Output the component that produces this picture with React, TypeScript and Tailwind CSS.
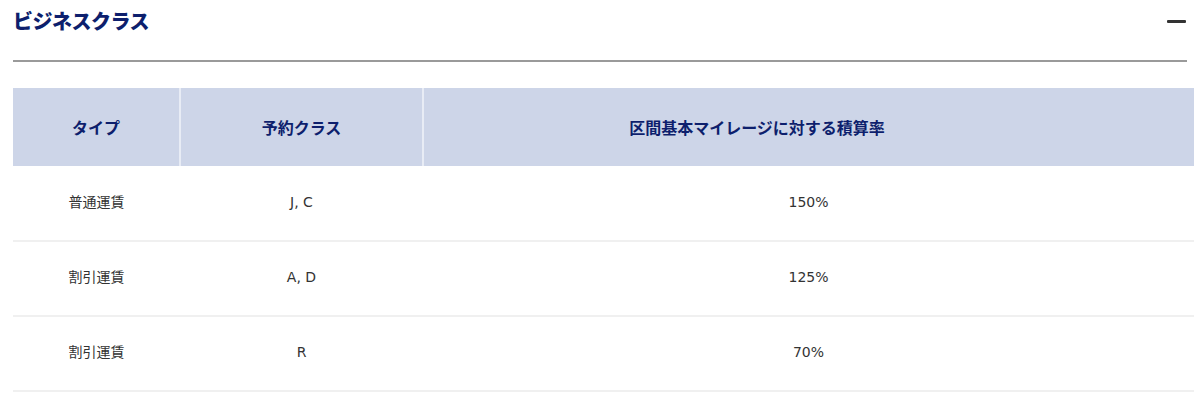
const rows = [
  { type: "普通運賃", cls: "J, C", rate: "150%" },
  { type: "割引運賃", cls: "A, D", rate: "125%" },
  { type: "割引運賃", cls: "R", rate: "70%" },
]

const font = { fontFamily: '"Noto Sans CJK JP", "DejaVu Sans", sans-serif' }
const bodyFont = { fontFamily: '"DejaVu Sans", "Noto Sans CJK JP", sans-serif' }

export default function App() {
  return (
    <div className="w-[1200px] h-[401px] bg-white px-[13px] overflow-hidden" style={font}>
      {/* section heading */}
      <div className="flex items-start justify-between h-[62px] border-b-[2px] border-[#9a9a9a] pt-[10px]">
        <h2 className="text-[20px] font-black text-[#0d1f6d] leading-[22px] tracking-[-0.5px]">ビジネスクラス</h2>
        <span className="block w-[19px] h-[3px] bg-[#333] rounded-[1px] mr-[1px] mt-[10px]" />
      </div>
      <div className="pt-[26px]">
        <table className="w-[1181px] border-collapse table-fixed">
          <colgroup>
            <col className="w-[167px]" />
            <col className="w-[243px]" />
            <col />
          </colgroup>
          <thead>
            <tr className="h-[78px] bg-[#cdd5e8] text-[#0d1f6d] text-[16px] font-bold">
              <th className="border-r-[2px] border-[#e8ecf5]">タイプ</th>
              <th className="border-r-[2px] border-[#e8ecf5]">予約クラス</th>
              <th className="pr-[104px]">区間基本マイレージに対する積算率</th>
            </tr>
          </thead>
          <tbody style={bodyFont}>
            {rows.map((r, i) => (
              <tr key={i} className="h-[75px] border-b-[2px] border-[#f0f0f0] text-[14px] text-[#333]">
                <td className="text-center pb-[2px]">{r.type}</td>
                <td className="text-center pb-[2px]">{r.cls}</td>
                <td className="text-center pb-[2px]">{r.rate}</td>
              </tr>
            ))}
          </tbody>
        </table>
      </div>
    </div>
  )
}
